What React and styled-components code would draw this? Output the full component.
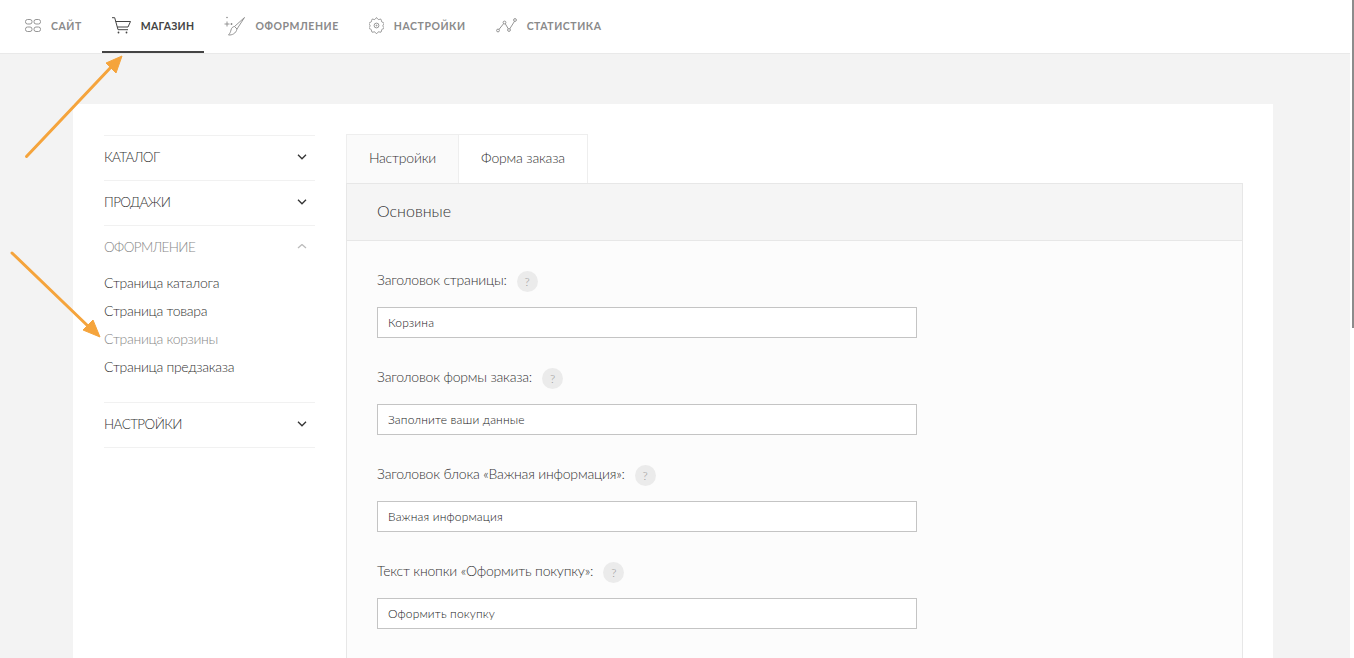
import React from "react";
import styled, { createGlobalStyle } from "styled-components";

const Global = createGlobalStyle`
  html, body {
    margin: 0;
    height: 100%;
    overflow: hidden;
    background: #f3f3f3;
    font-family: "Lato", "Open Sans", sans-serif;
    color: #333;
  }
  * { box-sizing: border-box; }
`;

const Page = styled.div`
  position: relative;
  height: 658px;
  overflow: hidden;
`;

const TopBar = styled.nav`
  display: flex;
  gap: 10px;
  height: 54px;
  padding-left: 15px;
  background: #fff;
  border-bottom: 1px solid #e9e9e9;
`;

const TopItem = styled.a`
  display: flex;
  align-items: center;
  gap: 10px;
  height: 53px;
  padding: 0 10px;
  font-size: 10.5px;
  font-weight: 700;
  letter-spacing: ${p => (p.$active ? 0.3 : 0.55)}px;
  color: ${p => (p.$active ? "#444" : "#8a8a8a")};
  border-bottom: 2px solid ${p => (p.$active ? "#444" : "transparent")};
  svg { flex: none; }
`;

const Card = styled.div`
  display: flex;
  width: 1200px;
  height: 560px;
  margin: 50px 0 0 73px;
  padding: 30px 30px 0 31px;
  background: #fff;
`;

const Side = styled.aside`
  width: 211px;
  margin: 1px 31px 0 0;
  flex: none;
`;

const SideGroup = styled.div`
  border-top: 1px solid #f1f1f1;
  &:last-child { border-bottom: 1px solid #f1f1f1; }
`;

const SideHead = styled.div`
  display: flex;
  align-items: center;
  justify-content: space-between;
  height: 44px;
  padding: 0 8px 3px 0;
  font-size: 13.5px;
  font-weight: 300;
  letter-spacing: -0.6px;
  color: ${p => (p.$open ? "#888" : "#333")};
`;

const SubList = styled.div`
  display: flex;
  flex-direction: column;
  margin-top: -1px;
  padding-bottom: 21px;
`;

const SubLink = styled.a`
  height: 28px;
  line-height: 28px;
  font-size: 14px;
  font-weight: 300;
  letter-spacing: -0.3px;
  color: ${p => (p.$current ? "#888" : "#333")};
`;

const Main = styled.main`
  flex: 1;
  min-width: 0;
`;

const Tabs = styled.div`
  display: flex;
  height: 49px;
`;

const Tab = styled.a`
  display: flex;
  align-items: center;
  justify-content: center;
  width: ${p => p.$w}px;
  padding-bottom: 3px;
  font-size: 14px;
  font-weight: 300;
  letter-spacing: -0.18px;
  color: #333;
  background: ${p => (p.$active ? "#fafafa" : "#fff")};
  border: 1px solid #eee;
  border-left-width: ${p => (p.$active ? 1 : 0)}px;
  border-bottom: 0;
`;

const Panel = styled.section`
  border: 1px solid #e7e7e7;
  background: #fcfcfc;
  height: 600px;
`;

const PanelHead = styled.h2`
  display: flex;
  align-items: center;
  height: 57px;
  margin: 0;
  padding: 0 0 3px 30px;
  font-size: 16px;
  font-weight: 300;
  color: #333;
  background: #f5f5f5;
  border-bottom: 1px solid #e7e7e7;
`;

const Form = styled.div`
  display: flex;
  flex-direction: column;
  gap: 30px;
  padding: 30px 30px 0;
`;

const LabelRow = styled.div`
  display: flex;
  align-items: flex-start;
  gap: 10px;
  height: 21px;
  margin-bottom: 15px;
  font-size: 14px;
  line-height: 18px;
  font-weight: 300;
  letter-spacing: -0.2px;
  color: #333;
`;

const Hint = styled.span`
  display: flex;
  align-items: center;
  justify-content: center;
  width: 21px;
  height: 21px;
  border-radius: 50%;
  background: #ebebeb;
  font-size: 12px;
  letter-spacing: 0;
  color: #999;
`;

const Input = styled.input`
  display: block;
  width: 540px;
  height: 31px;
  padding: 0 10px;
  border: 1px solid #c4c4c4;
  background: #fff;
  font-family: inherit;
  font-size: 12px;
  font-weight: 300;
  letter-spacing: 0.15px;
  color: #222;
  outline: none;
`;

const Arrows = styled.svg`
  position: absolute;
  left: 0;
  top: 0;
  pointer-events: none;
`;

const ScrollThumb = styled.div`
  position: absolute;
  right: 0;
  top: 0;
  width: 4px;
  height: 658px;
  background: #fff;
  &::after {
    content: "";
    position: absolute;
    right: 0;
    top: 0;
    width: 2px;
    height: 328px;
    background: #8c8c8c;
  }
`;

const Chevron = ({ up, color = "#333" }) => (
  <svg width="10" height="6" viewBox="0 0 10 6" fill="none" stroke={color} strokeWidth="1.3">
    <path d={up ? "M1 4 5 .5l4 3.500" : "M1 .8l4 4 4-4"} />
  </svg>
);

const stroke = { fill: "none", stroke: "#8a8a8a", strokeWidth: 0.9 };

const IconSite = () => (
  <svg width="16" height="13" viewBox="0 0 16 13" {...stroke}>
    <rect x=".5" y=".5" width="6.500" height="4.500" rx="2" />
    <rect x="9" y=".5" width="6.500" height="4.500" rx="2" />
    <rect x=".5" y="8" width="6.500" height="4.500" rx="2" />
    <rect x="9" y="8" width="6.500" height="4.500" rx="2" />
  </svg>
);

const IconCart = () => (
  <svg width="19" height="17" viewBox="0 0 19 17" fill="none" stroke="#444" strokeWidth="1">
    <path d="M0 .7h2.700l3.300 12h10" />
    <path d="M3.700 4.500H18.500l-2.500 5.500H5.300" />
    <circle cx="6.500" cy="15.500" r=".9" fill="#444" stroke="none" />
    <circle cx="14.500" cy="15.500" r=".9" fill="#444" stroke="none" />
  </svg>
);

const IconBrush = () => (
  <svg width="21" height="22" viewBox="0 0 21 22" {...stroke}>
    <path d="M20.500 2.500 10.500 11.500l2.500 2.500L20.500 2.500Z" />
    <path d="M10.500 11.500c-2 .3-3 1.500-3.500 3.500-.4 1.700-1 3.500-2.500 5 3.500.3 7.500-1.500 8.500-6" />
    <path d="M3 6.500v5M.5 9h5M7.500 8v2M6.500 9h2" />
    <circle cx="3" cy="2.500" r=".8" fill="#8a8a8a" stroke="none" />
  </svg>
);

const IconGear = () => (
  <svg width="15" height="17" viewBox="0 0 15 17" {...stroke}>
    <path d="M7.500 .7c.8 0 .9 1.500 1.800 1.800.9.300 2-.7 2.700-.2.700.5.200 1.900.8 2.600.6.700 2 .5 2.200 1.400.2.800-1.100 1.400-1.100 2.400s1.300 1.600 1.100 2.400c-.2.900-1.600.7-2.200 1.400-.6.700-.1 2.100-.8 2.600-.7.500-1.800-.5-2.700-.2-.9.300-1 1.800-1.800 1.800s-.9-1.500-1.800-1.800c-.9-.3-2 .7-2.700.2-.7-.5-.2-1.900-.8-2.600-.6-.7-2-.5-2.200-1.400-.2-.8 1.100-1.400 1.100-2.400S-.200 7.100 0 6.300c.2-.9 1.600-.7 2.200-1.400.6-.7.1-2.100.8-2.600.7-.5 1.800.5 2.700.2.900-.3 1-1.800 1.800-1.800Z" />
    <circle cx="7.500" cy="8.500" r="2.400" />
    <circle cx="7.500" cy="8.500" r=".5" />
  </svg>
);

const IconStats = () => (
  <svg width="21" height="15" viewBox="0 0 21 15" {...stroke}>
    <path d="M2.500 12 8.500 4.500l4.500 7.500L19 2.500" />
    <circle cx="2" cy="12.500" r="1.400" fill="#fff" />
    <circle cx="8.500" cy="4.500" r="1.400" fill="#fff" />
    <circle cx="13" cy="12" r="1.400" fill="#fff" />
    <circle cx="19" cy="2" r="1.400" fill="#fff" />
  </svg>
);

const fields = [
  ["Заголовок страницы:", "Корзина"],
  ["Заголовок формы заказа:", "Заполните ваши данные"],
  ["Заголовок блока «Важная информация»:", "Важная информация"],
  ["Текст кнопки «Оформить покупку»:", "Оформить покупку"],
];

export default function App() {
  return (
    <Page>
      <Global />
      <TopBar>
        <TopItem><IconSite />САЙТ</TopItem>
        <TopItem $active><IconCart />МАГАЗИН</TopItem>
        <TopItem><IconBrush />ОФОРМЛЕНИЕ</TopItem>
        <TopItem><IconGear />НАСТРОЙКИ</TopItem>
        <TopItem><IconStats />СТАТИСТИКА</TopItem>
      </TopBar>

      <Card>
        <Side>
          <SideGroup><SideHead>КАТАЛОГ<Chevron /></SideHead></SideGroup>
          <SideGroup><SideHead>ПРОДАЖИ<Chevron /></SideHead></SideGroup>
          <SideGroup>
            <SideHead $open>ОФОРМЛЕНИЕ<Chevron up color="#bbb" /></SideHead>
            <SubList>
              <SubLink>Страница каталога</SubLink>
              <SubLink>Страница товара</SubLink>
              <SubLink $current>Страница корзины</SubLink>
              <SubLink>Страница предзаказа</SubLink>
            </SubList>
          </SideGroup>
          <SideGroup><SideHead>НАСТРОЙКИ<Chevron /></SideHead></SideGroup>
        </Side>

        <Main>
          <Tabs>
            <Tab $active $w={113}>Настройки</Tab>
            <Tab $w={129}>Форма заказа</Tab>
          </Tabs>
          <Panel>
            <PanelHead>Основные</PanelHead>
            <Form>
              {fields.map(([label, value]) => (
                <div key={label}>
                  <LabelRow>{label}<Hint>?</Hint></LabelRow>
                  <Input defaultValue={value} />
                </div>
              ))}
            </Form>
          </Panel>
        </Main>
      </Card>

      <Arrows width="1354" height="658" viewBox="0 0 1354 658">
        <g fill="#f5a43c" stroke="#f5a43c">
          <path d="M26.500 156.500 113 65" strokeWidth="3" strokeLinecap="round" />
          <path d="M122 56 106 63l10 10Z" strokeWidth="1" />
          <path d="M12 253 90 328" strokeWidth="3" strokeLinecap="round" />
          <path d="M100 337 83 330l10-10Z" strokeWidth="1" />
        </g>
      </Arrows>
      <ScrollThumb />
    </Page>
  );
}
